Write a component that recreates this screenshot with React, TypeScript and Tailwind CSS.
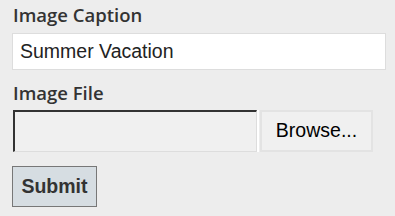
import React from "react";

export default function App() {
  return (
    <div className="w-[395px] h-[216px] bg-[#ededed] pl-3 pr-[9px] pt-[2px]">
      <div className="pl-px font-['Open_Sans',sans-serif] text-[18.5px] leading-[25px] font-semibold text-[#333333]">
        Image Caption
      </div>
      <div className="mt-[6px] h-[37px] border border-[#dddddd] bg-white flex items-center pl-[7px] font-['Liberation_Sans',Arial,sans-serif] text-[19.5px] text-[#222222]">
        Summer Vacation
      </div>
      <div className="mt-[10px] pl-px font-['Open_Sans',sans-serif] text-[18.5px] leading-[25px] font-semibold text-[#333333]">
        Image File
      </div>
      <div className="mt-[5px] flex items-stretch h-[42px]">
        <div className="ml-px w-[244px] bg-[#f0f0f0] border-t-2 border-l-2 border-r border-b border-t-[#333333] border-l-[#333333] border-r-[#dddddd] border-b-[#dddddd]" />
        <div className="w-[2px] bg-white" />
        <div className="ml-px w-[113px] border-2 border-[#e3e3e3] bg-[#f0f0f0] flex items-center justify-center font-['Liberation_Sans',Arial,sans-serif] text-[19.5px] text-black">
          Browse...
        </div>
      </div>
      <button className="mt-[14px] w-[85px] h-[41px] bg-[#d6dde2] border border-[#777777] flex items-center justify-center font-['Liberation_Sans',Arial,sans-serif] text-[19.5px] font-bold text-[#333333]">
        Submit
      </button>
    </div>
  );
}
